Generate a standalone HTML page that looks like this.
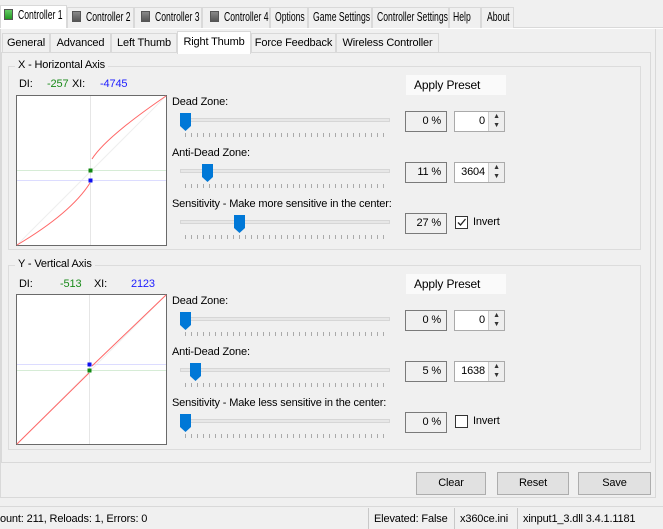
<!DOCTYPE html>
<html><head><meta charset="utf-8"><style>
*{box-sizing:border-box;margin:0;padding:0}
body{width:663px;height:529px;background:#f0f0f0;font:11px "Liberation Sans",sans-serif;letter-spacing:-0.15px;color:#000;position:relative;overflow:hidden}
div,span{white-space:nowrap}
.a{position:absolute}
.tab{position:absolute;border:1px solid #d9d9d9;border-bottom:none;background:#f0f0f0;height:22px;line-height:20px;text-align:center}
.tt{position:absolute;top:10px;font-size:12.5px;letter-spacing:0;transform:scaleX(0.69);transform-origin:0 50%;line-height:15px}
.sel{background:#fff;border-color:#d9d9d9}
.led{position:absolute;top:11px;width:9px;height:11px;border:1px solid #555;background:linear-gradient(#888,#555)}
.ledg{background:linear-gradient(#6c6,#292);top:9px}
.grp{position:absolute;border:1px solid #dcdcdc}
.gl{position:absolute;background:#f0f0f0;padding:0 3px;top:-8px;left:6px}
.box{position:absolute;border:1px solid #7a7a7a;height:21px;line-height:19px;text-align:right;padding-right:5px}
.spin{position:absolute;border:1px solid #aaa;background:#fff;height:21px;line-height:19px;text-align:right;padding-right:19px;width:51px}
.spin i{position:absolute;right:0;top:0;width:16px;height:19px;border-left:1px solid #ccc;background:#eee;font-style:normal;font-size:7px;line-height:9px;text-align:center;color:#333}
.track{position:absolute;height:4px;background:#e7e7e7;border:1px solid #d6d6d6;width:210px}
.ticks{position:absolute;height:4px;width:202px;background:repeating-linear-gradient(90deg,#aaa 0 1px,transparent 1px 6px)}
.thumb{position:absolute;width:11px;height:18px}
.btn{position:absolute;border:1px solid #adadad;background:#e1e1e1;height:23px;line-height:21px;text-align:center}
.preset{position:absolute;background:#fafafa;width:100px;height:20px;line-height:20px;padding-left:8px;font-size:12px}
.cb{position:absolute;width:13px;height:13px;border:1px solid #333;background:#fff}
</style></head><body>
<div class="a" style="left:0;top:27px;width:663px;height:1px;background:#d9d9d9"></div>
<div class="tab sel" style="left:0;top:5px;width:67px;height:24px"></div>
<div class="tab" style="left:67px;top:7px;width:67px"></div>
<div class="tab" style="left:134px;top:7px;width:68px"></div>
<div class="tab" style="left:202px;top:7px;width:68px"></div>
<div class="tab" style="left:270px;top:7px;width:38px"></div>
<div class="tab" style="left:308px;top:7px;width:64px"></div>
<div class="tab" style="left:372px;top:7px;width:77px"></div>
<div class="tab" style="left:449px;top:7px;width:32px"></div>
<div class="tab" style="left:481px;top:7px;width:33px"></div>
<span class="led ledg" style="left:4px"></span><span class="tt" style="left:18px;top:8px">Controller 1</span>
<span class="led" style="left:72px"></span><span class="tt" style="left:86px">Controller 2</span>
<span class="led" style="left:141px"></span><span class="tt" style="left:155px">Controller 3</span>
<span class="led" style="left:210px"></span><span class="tt" style="left:224px">Controller 4</span>
<span class="tt" style="left:275px">Options</span>
<span class="tt" style="left:313px">Game Settings</span>
<span class="tt" style="left:377px">Controller Settings</span>
<span class="tt" style="left:453px">Help</span>
<span class="tt" style="left:487px">About</span>
<div class="a" style="left:0;top:28px;width:656px;height:470px;border:1px solid #d9d9d9;border-top:none;background:#f0f0f0"></div>
<div class="a" style="left:0;top:28px;width:663px;height:1px;background:#fff"></div>
<div class="tab" style="left:2px;top:33px;width:48px;height:20px;line-height:18px">General</div>
<div class="tab" style="left:50px;top:33px;width:61px;height:20px;line-height:18px">Advanced</div>
<div class="tab" style="left:111px;top:33px;width:66px;height:20px;line-height:18px">Left Thumb</div>
<div class="tab" style="left:251px;top:33px;width:85px;height:20px;line-height:18px">Force Feedback</div>
<div class="tab" style="left:336px;top:33px;width:103px;height:20px;line-height:18px">Wireless Controller</div>
<div class="a" style="left:1px;top:52px;width:650px;height:411px;border:1px solid #d9d9d9;background:#f0f0f0"></div>
<div class="tab sel" style="left:177px;top:31px;width:74px;height:23px;line-height:20px;border-bottom:none">Right Thumb</div>

<div class="grp" style="left:8px;top:66px;width:633px;height:184px"><span class="gl">X - Horizontal Axis</span></div>
<div class="a" style="left:19px;top:78px">DI:</div>
<div class="a" style="left:47px;top:78px;color:#1a8a1a">-257</div>
<div class="a" style="left:72px;top:78px">XI:</div>
<div class="a" style="left:100px;top:78px;color:#1c1cff">-4745</div>
<svg class="a" style="left:16px;top:95px" width="151" height="151">
<rect x="0.5" y="0.5" width="150" height="150" fill="#fff" stroke="#6a6a6a"/>
<line x1="74.5" y1="1" x2="74.5" y2="150" stroke="#e6e6e6"/>
<line x1="1" y1="150" x2="150" y2="1" stroke="#eee"/>
<line x1="1" y1="75.5" x2="150" y2="75.5" stroke="#d6ecd6"/>
<line x1="1" y1="85.5" x2="150" y2="85.5" stroke="#dcdcff"/>
<path d="M1,150 Q55,118 74,88" fill="none" stroke="#f66"/>
<path d="M76,64 Q90,42 150,1" fill="none" stroke="#f66"/>
<rect x="72.5" y="73.5" width="4" height="4" fill="#118811"/>
<rect x="72.5" y="83.5" width="4" height="4" fill="#1010ee"/>
</svg>
<div class="preset" style="left:406px;top:75px">Apply Preset</div>
<div class="a" style="left:172px;top:96px">Dead Zone:</div>
<div class="track" style="left:180px;top:118px"></div>
<div class="ticks" style="left:185px;top:133px"></div>
<svg class="thumb" style="left:180px;top:113px" viewBox="0 0 11 18"><path d="M0,0H11V13L5.5,18L0,13Z" fill="#0078d7"/></svg>
<div class="box" style="left:405px;top:111px;width:42px">0 %</div>
<div class="spin" style="left:454px;top:111px">0<i>▲<br>▼</i></div>
<div class="a" style="left:172px;top:147px">Anti-Dead Zone:</div>
<div class="track" style="left:180px;top:169px"></div>
<div class="ticks" style="left:185px;top:184px"></div>
<svg class="thumb" style="left:202px;top:164px" viewBox="0 0 11 18"><path d="M0,0H11V13L5.5,18L0,13Z" fill="#0078d7"/></svg>
<div class="box" style="left:405px;top:162px;width:42px">11 %</div>
<div class="spin" style="left:454px;top:162px">3604<i>▲<br>▼</i></div>
<div class="a" style="left:172px;top:198px">Sensitivity - Make more sensitive in the center:</div>
<div class="track" style="left:180px;top:220px"></div>
<div class="ticks" style="left:185px;top:235px"></div>
<svg class="thumb" style="left:234px;top:215px" viewBox="0 0 11 18"><path d="M0,0H11V13L5.5,18L0,13Z" fill="#0078d7"/></svg>
<div class="box" style="left:405px;top:213px;width:42px">27 %</div>
<div class="cb" style="left:455px;top:216px"><svg width="11" height="11" style="position:absolute;left:0;top:0"><path d="M2,5.5L4.5,8L9.5,2" fill="none" stroke="#222" stroke-width="1.3"/></svg></div>
<div class="a" style="left:473px;top:216px">Invert</div>

<div class="grp" style="left:8px;top:265px;width:633px;height:185px"><span class="gl">Y - Vertical Axis</span></div>
<div class="a" style="left:19px;top:278px">DI:</div>
<div class="a" style="left:60px;top:278px;color:#1a8a1a">-513</div>
<div class="a" style="left:94px;top:278px">XI:</div>
<div class="a" style="left:131px;top:278px;color:#1c1cff">2123</div>
<svg class="a" style="left:16px;top:294px" width="151" height="151">
<rect x="0.5" y="0.5" width="150" height="150" fill="#fff" stroke="#6a6a6a"/>
<line x1="73.5" y1="1" x2="73.5" y2="150" stroke="#e6e6e6"/>
<line x1="1" y1="150" x2="150" y2="1" stroke="#eee"/>
<line x1="1" y1="70.5" x2="150" y2="70.5" stroke="#dcdcff"/>
<line x1="1" y1="76.5" x2="150" y2="76.5" stroke="#d6ecd6"/>
<path d="M1,150L73,79" fill="none" stroke="#f66"/>
<path d="M76,72L150,1" fill="none" stroke="#f66"/>
<rect x="71.5" y="68.5" width="4" height="4" fill="#1010ee"/>
<rect x="71.5" y="74.5" width="4" height="4" fill="#118811"/>
</svg>
<div class="preset" style="left:406px;top:274px">Apply Preset</div>
<div class="a" style="left:172px;top:295px">Dead Zone:</div>
<div class="track" style="left:180px;top:317px"></div>
<div class="ticks" style="left:185px;top:332px"></div>
<svg class="thumb" style="left:180px;top:312px" viewBox="0 0 11 18"><path d="M0,0H11V13L5.5,18L0,13Z" fill="#0078d7"/></svg>
<div class="box" style="left:405px;top:310px;width:42px">0 %</div>
<div class="spin" style="left:454px;top:310px">0<i>▲<br>▼</i></div>
<div class="a" style="left:172px;top:346px">Anti-Dead Zone:</div>
<div class="track" style="left:180px;top:368px"></div>
<div class="ticks" style="left:185px;top:383px"></div>
<svg class="thumb" style="left:190px;top:363px" viewBox="0 0 11 18"><path d="M0,0H11V13L5.5,18L0,13Z" fill="#0078d7"/></svg>
<div class="box" style="left:405px;top:361px;width:42px">5 %</div>
<div class="spin" style="left:454px;top:361px">1638<i>▲<br>▼</i></div>
<div class="a" style="left:172px;top:397px">Sensitivity - Make less sensitive in the center:</div>
<div class="track" style="left:180px;top:419px"></div>
<div class="ticks" style="left:185px;top:434px"></div>
<svg class="thumb" style="left:180px;top:414px" viewBox="0 0 11 18"><path d="M0,0H11V13L5.5,18L0,13Z" fill="#0078d7"/></svg>
<div class="box" style="left:405px;top:412px;width:42px">0 %</div>
<div class="cb" style="left:455px;top:415px"></div>
<div class="a" style="left:473px;top:415px">Invert</div>

<div class="btn" style="left:416px;top:472px;width:70px">Clear</div>
<div class="btn" style="left:497px;top:472px;width:72px">Reset</div>
<div class="btn" style="left:578px;top:472px;width:73px">Save</div>

<div class="a" style="left:0;top:506px;width:663px;height:1px;background:#d9d9d9"></div>
<div class="a" style="left:0;top:513px">ount: 211, Reloads: 1, Errors: 0</div>
<div class="a" style="left:368px;top:508px;width:1px;height:21px;background:#c8c8c8"></div>
<div class="a" style="left:374px;top:513px">Elevated: False</div>
<div class="a" style="left:454px;top:508px;width:1px;height:21px;background:#c8c8c8"></div>
<div class="a" style="left:460px;top:513px">x360ce.ini</div>
<div class="a" style="left:517px;top:508px;width:1px;height:21px;background:#c8c8c8"></div>
<div class="a" style="left:523px;top:513px">xinput1_3.dll 3.4.1.1181</div>
</body></html>
